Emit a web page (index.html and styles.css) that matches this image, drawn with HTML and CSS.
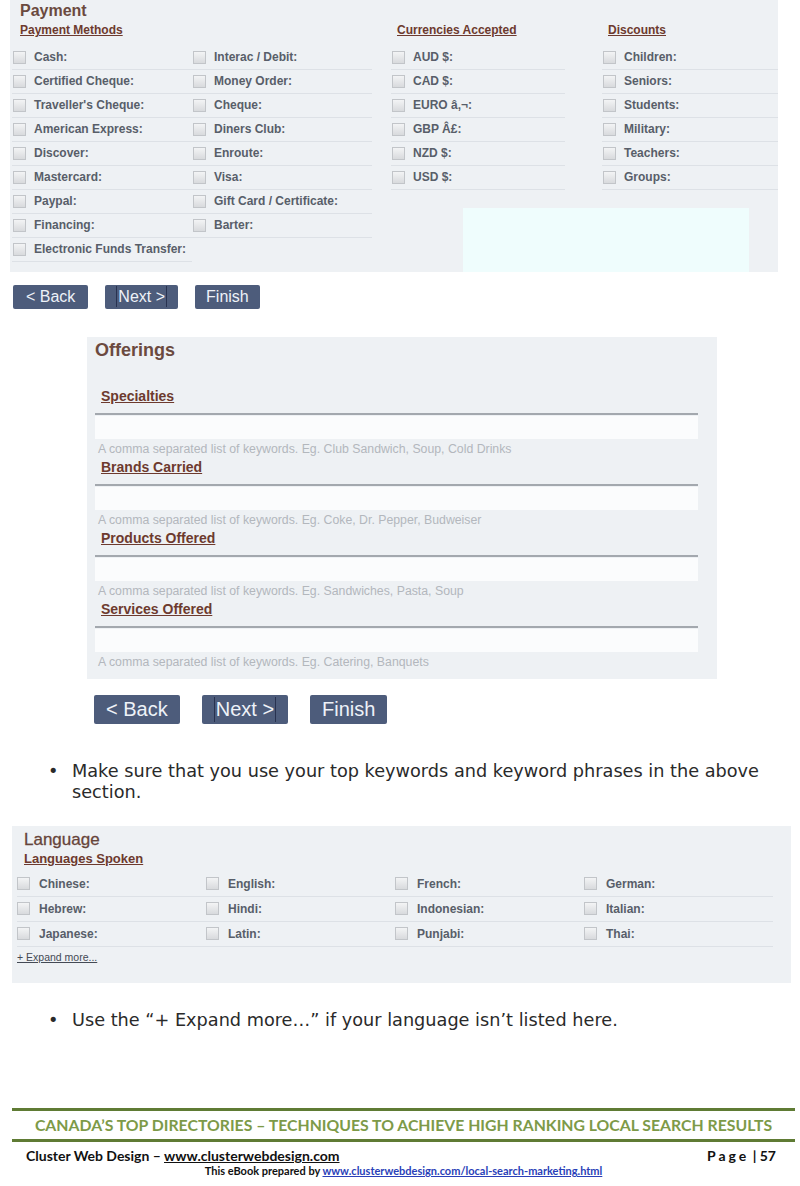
FILE: index.html
```html
<!DOCTYPE html>
<html lang="en">
<head>
<meta charset="utf-8">
<title>Payment, Offerings, Language</title>
<link rel="stylesheet" href="styles.css">
</head>
<body>
<div class="page">

  <section class="panel payment">
    <div class="panel-title">Payment</div>
    <div class="pay-cols">
      <div class="methods">
        <div class="sub">Payment Methods</div>
        <div class="grid2">
          <div class="row"><span class="cb"></span>Cash:</div>
          <div class="row"><span class="cb"></span>Interac / Debit:</div>
          <div class="row"><span class="cb"></span>Certified Cheque:</div>
          <div class="row"><span class="cb"></span>Money Order:</div>
          <div class="row"><span class="cb"></span>Traveller's Cheque:</div>
          <div class="row"><span class="cb"></span>Cheque:</div>
          <div class="row"><span class="cb"></span>American Express:</div>
          <div class="row"><span class="cb"></span>Diners Club:</div>
          <div class="row"><span class="cb"></span>Discover:</div>
          <div class="row"><span class="cb"></span>Enroute:</div>
          <div class="row"><span class="cb"></span>Mastercard:</div>
          <div class="row"><span class="cb"></span>Visa:</div>
          <div class="row"><span class="cb"></span>Paypal:</div>
          <div class="row"><span class="cb"></span>Gift Card / Certificate:</div>
          <div class="row"><span class="cb"></span>Financing:</div>
          <div class="row"><span class="cb"></span>Barter:</div>
          <div class="row"><span class="cb"></span>Electronic Funds Transfer:</div>
        </div>
      </div>
      <div class="right">
        <div class="cur-disc">
          <div class="currencies">
            <div class="sub ind">Currencies Accepted</div>
            <div class="row"><span class="cb"></span>AUD $:</div>
            <div class="row"><span class="cb"></span>CAD $:</div>
            <div class="row"><span class="cb"></span>EURO â‚¬:</div>
            <div class="row"><span class="cb"></span>GBP Â£:</div>
            <div class="row"><span class="cb"></span>NZD $:</div>
            <div class="row"><span class="cb"></span>USD $:</div>
          </div>
          <div class="discounts">
            <div class="sub ind">Discounts</div>
            <div class="row"><span class="cb"></span>Children:</div>
            <div class="row"><span class="cb"></span>Seniors:</div>
            <div class="row"><span class="cb"></span>Students:</div>
            <div class="row"><span class="cb"></span>Military:</div>
            <div class="row"><span class="cb"></span>Teachers:</div>
            <div class="row"><span class="cb"></span>Groups:</div>
          </div>
        </div>
        <div class="cyan"></div>
      </div>
    </div>
  </section>

  <div class="btns small">
    <button class="btn wide">&lt; Back</button>
    <button class="btn"><span class="focus">Next &gt;</span></button>
    <button class="btn">Finish</button>
  </div>

  <section class="offerings">
    <div class="off-title">Offerings</div>
    <div class="field">
      <div class="field-title">Specialties</div>
      <div class="field-line"></div>
      <div class="field-input"></div>
      <div class="hint">A comma separated list of keywords. Eg. Club Sandwich, Soup, Cold Drinks</div>
    </div>
    <div class="field">
      <div class="field-title">Brands Carried</div>
      <div class="field-line"></div>
      <div class="field-input"></div>
      <div class="hint">A comma separated list of keywords. Eg. Coke, Dr. Pepper, Budweiser</div>
    </div>
    <div class="field">
      <div class="field-title">Products Offered</div>
      <div class="field-line"></div>
      <div class="field-input"></div>
      <div class="hint">A comma separated list of keywords. Eg. Sandwiches, Pasta, Soup</div>
    </div>
    <div class="field">
      <div class="field-title">Services Offered</div>
      <div class="field-line"></div>
      <div class="field-input"></div>
      <div class="hint">A comma separated list of keywords. Eg. Catering, Banquets</div>
    </div>
  </section>

  <div class="btns big">
    <button class="btn">&lt; Back</button>
    <button class="btn"><span class="focus">Next &gt;</span></button>
    <button class="btn">Finish</button>
  </div>

  <ul class="bullets first">
    <li><span class="dot">•</span><span class="btxt">Make sure that you use your top keywords and keyword phrases in the above section.</span></li>
  </ul>

  <section class="language">
    <div class="lang-title">Language</div>
    <div class="sub lang-sub">Languages Spoken</div>
    <div class="grid4">
      <div class="row lrow"><span class="cb"></span>Chinese:</div>
      <div class="row lrow"><span class="cb"></span>English:</div>
      <div class="row lrow"><span class="cb"></span>French:</div>
      <div class="row lrow"><span class="cb"></span>German:</div>
      <div class="row lrow"><span class="cb"></span>Hebrew:</div>
      <div class="row lrow"><span class="cb"></span>Hindi:</div>
      <div class="row lrow"><span class="cb"></span>Indonesian:</div>
      <div class="row lrow"><span class="cb"></span>Italian:</div>
      <div class="row lrow"><span class="cb"></span>Japanese:</div>
      <div class="row lrow"><span class="cb"></span>Latin:</div>
      <div class="row lrow"><span class="cb"></span>Punjabi:</div>
      <div class="row lrow"><span class="cb"></span>Thai:</div>
    </div>
    <div class="expand">+ Expand more...</div>
  </section>

  <ul class="bullets second">
    <li><span class="dot">•</span><span class="btxt">Use the “+ Expand more…” if your language isn’t listed here.</span></li>
  </ul>

  <footer class="footer">
    <div class="f-rule">CANADA’S TOP DIRECTORIES – TECHNIQUES TO ACHIEVE HIGH RANKING LOCAL SEARCH RESULTS</div>
    <div class="f-row">
      <span>Cluster Web Design – <u>www.clusterwebdesign.com</u></span>
      <span><span class="pg">Page</span> | 57</span>
    </div>
    <div class="f-credit">This eBook prepared by <a href="#">www.clusterwebdesign.com/local-search-marketing.html</a></div>
  </footer>

</div>
</body>
</html>
```
FILE: styles.css
```css
* { box-sizing: border-box; }

body {
  margin: 0;
  background: #ffffff;
  font-family: "Liberation Sans", Arial, sans-serif;
}

.page { width: 800px; }

/* ---------- shared ---------- */
.panel-title {
  font-size: 16px;
  font-weight: bold;
  color: #6b4a3f;
  line-height: 20px;
  margin-left: 8px;
}

.sub {
  font-size: 12px;
  font-weight: bold;
  color: #6d3a2e;
  text-decoration: underline;
  line-height: 16px;
  height: 16px;
  margin: 1px 0 8px 8px;
  white-space: nowrap;
}
.sub.ind { margin-left: 6px; }

.row {
  display: flex;
  align-items: center;
  gap: 8px;
  height: 24px;
  padding: 0 0 1px 1px;
  border-bottom: 1px solid #dde1e6;
  font-size: 12px;
  font-weight: bold;
  color: #585e69;
  white-space: nowrap;
}

.cb {
  flex: none;
  width: 13px;
  height: 13px;
  border: 1px solid #c2c5c9;
  background: linear-gradient(#f3f4f5, #d8dadd);
}

/* ---------- payment ---------- */
.payment {
  margin-left: 10px;
  width: 768px;
  background: #eef1f4;
  padding: 1px 0 0 2px;
}
.pay-cols { display: flex; align-items: flex-start; }
.methods { width: 360px; margin-bottom: 10px; }
.grid2 { display: grid; grid-template-columns: 180px 180px; }
.right { margin-left: 19px; display: flex; flex-direction: column; }
.cur-disc { display: flex; gap: 37px; }
.currencies { width: 174px; }
.discounts { width: 176px; }
.cyan {
  width: 286px;
  height: 64px;
  margin: 18px 0 0 72px;
  background: #effdfd;
}

/* ---------- buttons ---------- */
.btns { display: flex; }
.btn {
  border: none;
  border-radius: 2px;
  background: #4d5c7b;
  color: #eef2f8;
  font-family: "Liberation Sans", Arial, sans-serif;
  padding: 0 12px;
  cursor: pointer;
}
.btns.small { margin: 13px 0 0 13px; gap: 17px; }
.btns.small .btn { height: 24px; font-size: 16px; line-height: 24px; padding: 0 11px; }
.btns.small .btn.wide { padding: 0 13px; }
.btns.big { margin: 16px 0 0 94px; gap: 22px; }
.btns.big .btn { height: 29px; font-size: 20px; line-height: 29px; }
.focus {
  display: inline-block;
  border-left: 1px solid #283250;
  border-right: 1px solid #283250;
  padding: 0 1px;
  line-height: 21px;
}
.btns.big .focus { line-height: 25px; }

/* ---------- offerings ---------- */
.offerings {
  margin: 28px 0 0 87px;
  width: 630px;
  background: #eef1f4;
  padding: 2px 19px 10px 8px;
}
.off-title {
  font-size: 18px;
  font-weight: bold;
  line-height: 22px;
  color: #6b4a3f;
}
.field { margin-top: 2px; }
.off-title + .field { margin-top: 26px; }
.field-title {
  font-size: 14px;
  font-weight: bold;
  color: #6d3a2e;
  text-decoration: underline;
  line-height: 18px;
  margin-left: 6px;
}
.field-line { height: 2px; background: #a3a8ae; margin-top: 8px; }
.field-input { height: 23px; background: #fbfcfd; margin-top: 1px; }
.hint {
  font-size: 12.3px;
  line-height: 14px;
  color: #b3b7bd;
  margin: 3px 0 0 3px;
  white-space: nowrap;
}

/* ---------- bullets ---------- */
.bullets {
  list-style: none;
  margin: 0;
  padding: 0 0 0 48px;
  font-family: "DejaVu Sans", sans-serif;
  font-size: 17.7px;
  line-height: 21px;
  color: #2a2a2a;
}
.bullets li { display: flex; }
.dot { width: 24px; flex: none; }
.btxt { width: 700px; }
.bullets.first { margin-top: 37px; }
.bullets.second { margin-top: 27px; }

/* ---------- language ---------- */
.language {
  margin: 23px 0 0 12px;
  width: 779px;
  background: #eef1f4;
  padding: 4px 0 20px 5px;
}
.lang-title {
  font-size: 17px;
  line-height: 20px;
  color: #66443a;
  margin-left: 7px;
  -webkit-text-stroke: 0.3px #66443a;
}
.sub.lang-sub { font-size: 13px; margin: 1px 0 5px 7px; }
.grid4 { display: grid; grid-template-columns: repeat(4, 189px); }
.row.lrow { height: 25px; gap: 9px; font-size: 12px; padding-left: 0; }
.expand {
  font-size: 10.5px;
  line-height: 12px;
  margin-top: 4px;
  color: #444a55;
  text-decoration: underline;
}

/* ---------- footer ---------- */
.footer {
  margin: 77px 5px 0 12px;
  font-family: Lato, "Liberation Sans", sans-serif;
  font-weight: bold;
}
.f-rule {
  border-top: 3px solid #5f7b34;
  border-bottom: 3px solid #5f7b34;
  height: 34px;
  line-height: 28px;
  text-align: center;
  font-size: 15.8px;
  color: #7d9a48;
  white-space: nowrap;
}
.f-row {
  display: flex;
  justify-content: space-between;
  margin-top: 6px;
  padding: 0 19px 0 14px;
  font-size: 14px;
  line-height: 16px;
  color: #111;
}
.pg { letter-spacing: 3px; }
.f-credit {
  text-align: center;
  font-size: 11px;
  line-height: 13px;
  color: #111;
}
.f-credit a { color: #2a3fb8; text-decoration: underline; }
```
